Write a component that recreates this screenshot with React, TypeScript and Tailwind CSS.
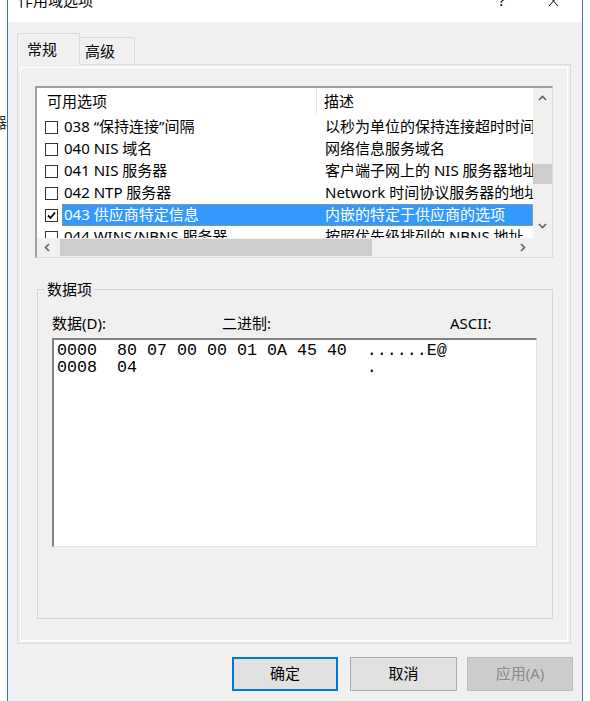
const options = [
  { code: "038 “保持连接”间隔", desc: "以秒为单位的保持连接超时时间", checked: false, selected: false },
  { code: "040 NIS 域名", desc: "网络信息服务域名", checked: false, selected: false },
  { code: "041 NIS 服务器", desc: "客户端子网上的 NIS 服务器地址", checked: false, selected: false },
  { code: "042 NTP 服务器", desc: "Network 时间协议服务器的地址", checked: false, selected: false },
  { code: "043 供应商特定信息", desc: "内嵌的特定于供应商的选项", checked: true, selected: true },
  { code: "044 WINS/NBNS 服务器", desc: "按照优先级排列的 NBNS 地址", checked: false, selected: false },
]

const hexLines = [
  "0000  80 07 00 00 01 0A 45 40  ......E@",
  "0008  04                       .",
]

const Chevron = ({ dir }: { dir: "up" | "down" | "left" | "right" }) => {
  const pts = {
    up: "1,5 4.5,1.5 8,5",
    down: "1,1 4.5,4.5 8,1",
    left: "5,1 1.5,4.5 5,8",
    right: "1,1 4.5,4.5 1,8",
  }[dir]
  const horiz = dir === "up" || dir === "down"
  return (
    <svg width={horiz ? 9 : 6} height={horiz ? 6 : 9} viewBox={horiz ? "0 0 9 6" : "0 0 6 9"}>
      <polyline points={pts} fill="none" stroke="#606060" strokeWidth="1.6" />
    </svg>
  )
}

const CheckBox = ({ checked }: { checked: boolean }) => (
  <div className="flex h-[13px] w-[13px] shrink-0 items-center justify-center border border-[#333333] bg-white">
    {checked && (
      <svg width="9" height="9" viewBox="0 0 9 9">
        <polyline points="1,4.5 3.5,7 8,1.5" fill="none" stroke="#000" strokeWidth="1.8" />
      </svg>
    )}
  </div>
)

const OptionList = () => {
  return (
    <div className="ml-[14px] mt-[18px] flex h-[172px] w-[518px] flex-col border-b border-l-2 border-r border-t-2 border-b-[#dadada] border-l-[#a0a0a0] border-r-[#dadada] border-t-[#a0a0a0] bg-white">
      <div className="flex h-[150px]">
        <div className="w-[496px] shrink-0 overflow-hidden">
          {/* header */}
          <div className="flex h-[26px] items-center">
            <div className="flex h-full w-[280px] shrink-0 items-center border-r border-[#e5e5e5] pb-[1px] pl-[10px] leading-[18px]">
              可用选项
            </div>
            <div className="pb-[1px] pl-[7px] leading-[18px]">描述</div>
          </div>

          <div className="pt-[2px]">
            {options.map((opt) => (
              <div key={opt.code} className="flex h-[22px] items-center whitespace-nowrap">
                <div className="flex w-[25px] shrink-0 items-center pl-[8px]">
                  <CheckBox checked={opt.checked} />
                </div>
                <div
                  className={
                    opt.selected
                      ? "flex h-full min-w-0 flex-1 items-center bg-[#3399ff] pb-[2px] text-white outline-1 -outline-offset-1 outline-dotted outline-[#c8955a]"
                      : "flex h-full min-w-0 flex-1 items-center pb-[2px]"
                  }
                >
                  <div className="w-[255px] shrink-0 overflow-hidden pl-[2px] leading-[18px]">{opt.code}</div>
                  <div className="min-w-0 flex-1 overflow-hidden pl-[8px] leading-[18px]">{opt.desc}</div>
                </div>
              </div>
            ))}
          </div>
        </div>

        {/* vertical scrollbar */}
        <div className="flex w-[19px] shrink-0 flex-col bg-[#f0f0f0]">
          <div className="flex h-[20px] items-center justify-center">
            <Chevron dir="up" />
          </div>
          <div className="flex-1">
            <div className="mt-[56px] h-[20px] bg-[#cdcdcd]" />
          </div>
          <div className="flex h-[22px] items-center justify-center pb-[2px]">
            <Chevron dir="down" />
          </div>
        </div>
      </div>

      {/* horizontal scrollbar */}
      <div className="flex h-[19px]">
        <div className="flex flex-1 bg-[#f0f0f0]">
          <div className="flex w-[20px] items-center justify-center">
            <Chevron dir="left" />
          </div>
          <div className="flex-1 py-[1px]">
            <div className="ml-[3px] h-full w-[312px] bg-[#cdcdcd]" />
          </div>
          <div className="flex w-[20px] items-center justify-center">
            <Chevron dir="right" />
          </div>
        </div>
        <div className="w-[19px] bg-[#f0f0f0]" />
      </div>
    </div>
  )
}

const DataGroup = () => {
  return (
    <fieldset className="ml-[16px] mt-[22px] w-[516px] border border-[#d5d5d5] pb-[71px]">
      <legend className="ml-[7px] px-[2px] leading-[18px]">数据项</legend>
      <div className="pl-[14px]">
        <div className="mt-[16px] flex leading-[18px]">
          <div className="w-[170px]">数据(D):</div>
          <div className="w-[228px]">二进制:</div>
          <div>ASCII:</div>
        </div>
        <div className="mt-[6px] h-[209px] w-[485px] border-b border-l-2 border-r border-t-2 border-b-[#e3e3e3] border-l-[#828282] border-r-[#e3e3e3] border-t-[#828282] bg-white pl-[3px] pt-[2px] font-['Liberation_Mono',monospace] text-[16.667px] leading-[17px] whitespace-pre">
          {hexLines.map((line) => (
            <div key={line}>{line}</div>
          ))}
        </div>
      </div>
    </fieldset>
  )
}

export default function App() {
  return (
    <div className="flex h-[701px] w-[590px] overflow-hidden bg-white font-['Noto_Sans','Noto_Sans_CJK_SC',sans-serif] text-[15px] text-black">
      {/* bit of the window behind */}
      <div className="w-[7px] overflow-hidden pt-[113px]">
        <div className="-ml-[8px] leading-[18px] text-[#333333]">器</div>
      </div>
      <div className="w-px bg-[#2b7bc6]" />

      <div className="flex w-[574px] flex-col">
        {/* title bar, scrolled partly off the top */}
        <div className="flex h-[22px] items-start bg-white">
          <div className="ml-[10px] mt-[-7px] leading-[15px]">作用域选项</div>
          <div className="ml-auto mt-[-7px] leading-[15px]">?</div>
          <svg className="ml-[44px] mr-[24px] mt-[-4px]" width="9" height="10" viewBox="0 0 9 10">
            <line x1="0" y1="0" x2="9" y2="10" stroke="#000" strokeWidth="1" />
            <line x1="9" y1="0" x2="0" y2="10" stroke="#000" strokeWidth="1" />
          </svg>
        </div>

        <div className="flex flex-1 flex-col bg-[#f0f0f0]">
          {/* tabs */}
          <div className="ml-[9px] mt-[11px] flex h-[31px] items-end">
            <div className="relative z-10 mb-[-1px] h-[32px] w-[63px] border border-b-0 border-[#d9d9d9] bg-[#f0f0f0] pl-[9px] pt-[5px] leading-[20px]">
              常规
            </div>
            <div className="h-[27px] w-[55px] border border-b-0 border-l-0 border-[#d9d9d9] pl-[5px] pt-[3px] leading-[20px]">
              高级
            </div>
          </div>

          {/* tab page */}
          <div className="ml-[9px] h-[580px] w-[554px] border border-[#d9d9d9] p-[2px]">
            <div className="h-full border border-white">
              <OptionList />
              <DataGroup />
            </div>
          </div>

          {/* buttons */}
          <div className="mr-[9px] mt-[13px] flex justify-end leading-[18px]">
            <button className="flex h-[34px] w-[106px] items-center justify-center border-2 border-[#0078d7] bg-[#e1e1e1] pb-[2px]">
              确定
            </button>
            <button className="ml-[12px] flex h-[34px] w-[107px] items-center justify-center border border-[#adadad] bg-[#e1e1e1] pb-[2px]">
              取消
            </button>
            <button className="ml-[10px] flex h-[34px] w-[106px] items-center justify-center border border-[#bfbfbf] bg-[#cccccc] pb-[2px] text-[#8a8a8a]">
              应用(A)
            </button>
          </div>
        </div>
      </div>

      <div className="w-px bg-[#2b7bc6]" />
      <div className="w-[7px]" />
    </div>
  )
}
